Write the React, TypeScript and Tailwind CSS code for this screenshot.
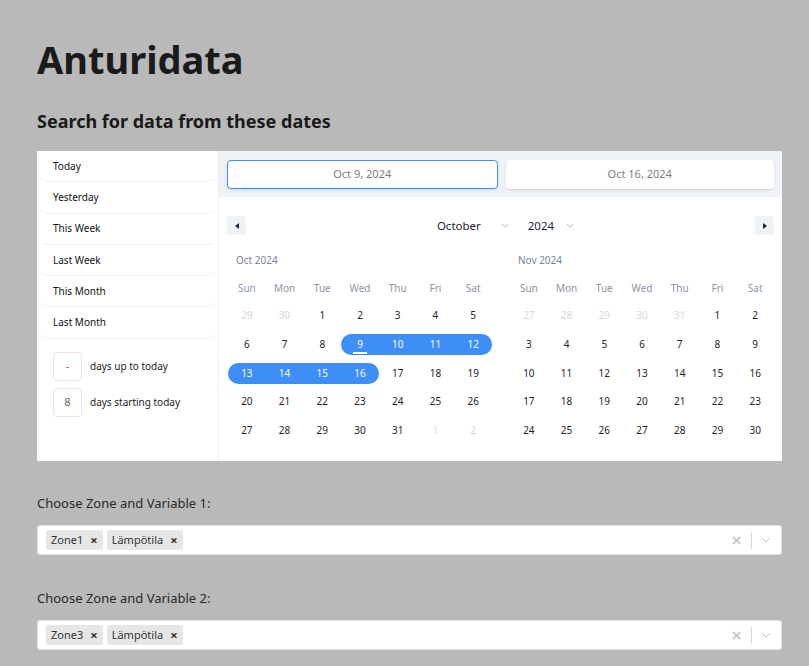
import React from 'react';

const font = { fontFamily: '"Noto Sans", "Open Sans", sans-serif' };

type Day = { n: number; muted?: boolean; sel?: 'start' | 'mid' | 'end'; today?: boolean };

const octWeeks: Day[][] = [
  [{ n: 29, muted: true }, { n: 30, muted: true }, { n: 1 }, { n: 2 }, { n: 3 }, { n: 4 }, { n: 5 }],
  [{ n: 6 }, { n: 7 }, { n: 8 }, { n: 9, sel: 'start', today: true }, { n: 10, sel: 'mid' }, { n: 11, sel: 'mid' }, { n: 12, sel: 'end' }],
  [{ n: 13, sel: 'start' }, { n: 14, sel: 'mid' }, { n: 15, sel: 'mid' }, { n: 16, sel: 'end' }, { n: 17 }, { n: 18 }, { n: 19 }],
  [{ n: 20 }, { n: 21 }, { n: 22 }, { n: 23 }, { n: 24 }, { n: 25 }, { n: 26 }],
  [{ n: 27 }, { n: 28 }, { n: 29 }, { n: 30 }, { n: 31 }, { n: 1, muted: true }, { n: 2, muted: true }],
];

const novWeeks: Day[][] = [
  [{ n: 27, muted: true }, { n: 28, muted: true }, { n: 29, muted: true }, { n: 30, muted: true }, { n: 31, muted: true }, { n: 1 }, { n: 2 }],
  [{ n: 3 }, { n: 4 }, { n: 5 }, { n: 6 }, { n: 7 }, { n: 8 }, { n: 9 }],
  [{ n: 10 }, { n: 11 }, { n: 12 }, { n: 13 }, { n: 14 }, { n: 15 }, { n: 16 }],
  [{ n: 17 }, { n: 18 }, { n: 19 }, { n: 20 }, { n: 21 }, { n: 22 }, { n: 23 }],
  [{ n: 24 }, { n: 25 }, { n: 26 }, { n: 27 }, { n: 28 }, { n: 29 }, { n: 30 }],
];

const weekdays = ['Sun', 'Mon', 'Tue', 'Wed', 'Thu', 'Fri', 'Sat'];

const Chevron = ({ className = '' }: { className?: string }) => (
  <svg viewBox="0 0 10 6" className={className} fill="none" stroke="currentColor" strokeWidth="1">
    <path d="M1 1l4 4 4-4" />
  </svg>
);

const Month = ({ title, weeks }: { title: string; weeks: Day[][] }) => (
  <div className="w-[264px]">
    <div className="pl-2 text-[10px] text-[#7a8494] leading-[14px] h-[14px]">{title}</div>
    <div className="grid grid-cols-7 mt-[14px] text-[10px] text-[#8b95a5] leading-[14px]">
      {weekdays.map((w) => (
        <div key={w} className="text-center">{w}</div>
      ))}
    </div>
    <div className="mt-[10px] flex flex-col gap-y-[7.75px]">
      {weeks.map((week, i) => (
        <div key={i} className="grid grid-cols-7">
          {week.map((d, j) => {
            const selCls = d.sel
              ? 'bg-[#3d8ef6] text-white' +
                (d.sel === 'start' ? ' rounded-l-full' : '') +
                (d.sel === 'end' ? ' rounded-r-full' : '')
              : d.muted
              ? 'text-[#d3d8de]'
              : 'text-[#1f2328]';
            return (
              <div key={j} className={`h-[21px] flex items-center justify-center text-[10px] ${selCls}`}>
                <span className="relative">
                  {d.n}
                  {d.today && <span className="absolute left-[-4px] right-[-4px] bottom-[-2px] h-[2px] bg-white" />}
                </span>
              </div>
            );
          })}
        </div>
      ))}
    </div>
  </div>
);

const Chip = ({ label }: { label: string }) => (
  <div className="flex items-center h-[20px] bg-[#e6e6e6] rounded-[2px] pl-[5px] pr-[5px] gap-[7px] text-[11px] text-[#333]">
    <span>{label}</span>
    <span className="text-[13px] font-bold text-[#333] leading-none">×</span>
  </div>
);

const ZoneSelect = ({ label, chips }: { label: string; chips: string[] }) => (
  <div>
    <div className="text-[13px] text-[#2a2a2a] leading-[18px]">{label}</div>
    <div className="mt-[13px] h-[30px] bg-white rounded-[3px] border border-[#e3e3e3] flex items-center pl-[8px] pr-[1px]">
      <div className="flex-1 flex items-center gap-[4px]">
        {chips.map((c) => (
          <Chip key={c} label={c} />
        ))}
      </div>
      <div className="flex items-center">
        <svg viewBox="0 0 10 10" className="w-[9px] h-[9px] text-[#c4c4c4] mr-[10px]" stroke="currentColor" strokeWidth="1.8">
          <path d="M1 1l8 8M9 1l-8 8" />
        </svg>
        <div className="w-px h-[17px] bg-[#d6d6d6]" />
        <div className="w-[28px] flex justify-center">
          <Chevron className="w-[10px] h-[6px] text-[#c4c4c4]" />
        </div>
      </div>
    </div>
  </div>
);

export default function App() {
  const presets = ['Today', 'Yesterday', 'This Week', 'Last Week', 'This Month', 'Last Month'];
  return (
    <div className="min-h-screen bg-[#b9b9b9] pl-[37px] pr-[27px] pt-[28px] pb-6" style={font}>
      <h1 className="text-[38px] font-bold text-[#1a1a1a] leading-[62px]">Anturidata</h1>
      <h2 className="mt-[18px] text-[18px] font-bold text-[#1a1a1a] leading-[26px]">Search for data from these dates</h2>

      {/* Date range picker */}
      <div className="mt-[17px] bg-white flex h-[310px]">
        {/* Presets */}
        <div className="w-[182px] border-r border-[#eef0f3] px-[3px]">
          {presets.map((p) => (
            <div
              key={p}
              className="h-[31.3px] flex items-center pl-[13px] text-[10px] text-[#111] border-b border-[#edf0f4] rounded-b-[8px]"
            >
              {p}
            </div>
          ))}
          <div className="mt-[13px] pl-[13px] flex flex-col gap-[7px]">
            <div className="flex items-center gap-[8px]">
              <div className="w-[29px] h-[29px] border border-[#e2e6eb] rounded-[4px] flex items-center justify-center text-[11px] text-[#c0463f]">-</div>
              <span className="text-[10px] text-[#222]">days up to today</span>
            </div>
            <div className="flex items-center gap-[8px]">
              <div className="w-[29px] h-[29px] border border-[#e2e6eb] rounded-[4px] flex items-center justify-center text-[11px] text-[#666]">8</div>
              <span className="text-[10px] text-[#222]">days starting today</span>
            </div>
          </div>
        </div>

        {/* Calendars */}
        <div className="flex-1 flex flex-col">
          <div className="h-[46px] bg-[#eff2f7] flex items-center gap-[8px] pl-[8px] pr-[8px]">
            <div className="flex-1 h-[29px] bg-white border border-[#3d8ef6] rounded-[4px] flex items-center justify-center text-[11px] text-[#7c7c7c] shadow-sm">
              Oct 9, 2024
            </div>
            <div className="flex-1 h-[29px] bg-white rounded-[4px] flex items-center justify-center text-[11px] text-[#7c7c7c] shadow-[0_1px_2px_rgba(0,0,0,0.15)]">
              Oct 16, 2024
            </div>
          </div>

          <div className="mt-[19px] flex items-center px-[8px] h-[19px]">
            <button className="w-[19px] h-[19px] bg-[#eff2f7] rounded-[3px] flex items-center justify-center">
              <svg viewBox="0 0 4 6" className="w-[4px] h-[6px] text-[#1c2536]" fill="currentColor">
                <path d="M4 0v6L0 3z" />
              </svg>
            </button>
            <div className="flex-1 flex items-center justify-center pl-[10px] text-[11.5px] text-[#1c2536]">
              <span>October</span>
              <Chevron className="ml-[20px] w-[8px] h-[5px] text-[#a0a7b2]" />
              <span className="ml-[19px]">2024</span>
              <Chevron className="ml-[12px] w-[8px] h-[5px] text-[#a0a7b2]" />
            </div>
            <button className="w-[19px] h-[19px] bg-[#eff2f7] rounded-[3px] flex items-center justify-center">
              <svg viewBox="0 0 4 6" className="w-[4px] h-[6px] text-[#1c2536]" fill="currentColor">
                <path d="M0 0v6l4-3z" />
              </svg>
            </button>
          </div>

          <div className="mt-[18px] flex gap-[18px] pl-[9px]">
            <Month title="Oct 2024" weeks={octWeeks} />
            <Month title="Nov 2024" weeks={novWeeks} />
          </div>
        </div>
      </div>

      <div className="mt-[33px]">
        <ZoneSelect label="Choose Zone and Variable 1:" chips={['Zone1', 'Lämpötila']} />
      </div>
      <div className="mt-[34px]">
        <ZoneSelect label="Choose Zone and Variable 2:" chips={['Zone3', 'Lämpötila']} />
      </div>
    </div>
  );
}
